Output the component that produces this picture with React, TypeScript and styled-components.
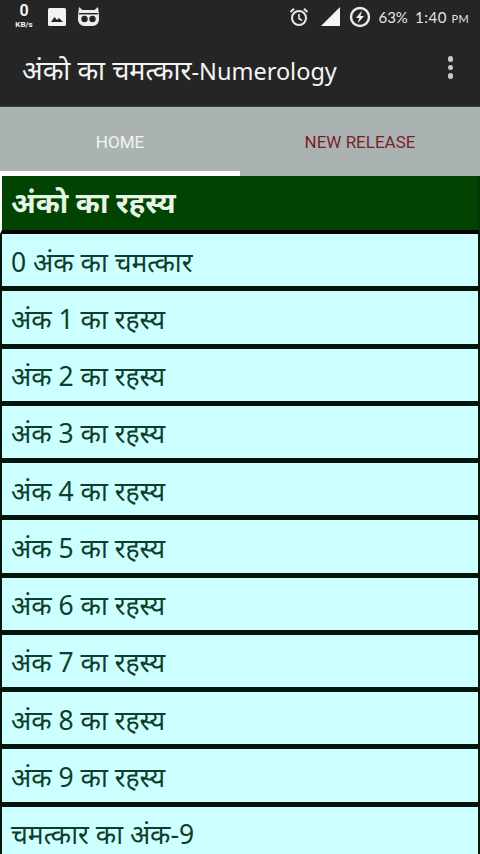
import React from 'react';
import styled, { createGlobalStyle } from 'styled-components';

const Global = createGlobalStyle`
  html, body { margin: 0; padding: 0; background: #fff; }
  body { font-family: "Noto Sans", "Roboto", sans-serif; }
`;

const Screen = styled.div`
  width: 480px;
  height: 854px;
  overflow: hidden;
  display: flex;
  flex-direction: column;
  background: #0a1a0f;
`;

const Header = styled.div`
  background: #252526;
  height: 106px;
  flex: none;
  display: flex;
  flex-direction: column;
  color: #f2f2f2;
`;

const StatusBar = styled.div`
  height: 33px;
  flex: none;
  padding: 0 11px 0 12px;
  display: flex;
  align-items: center;
  justify-content: space-between;
`;

const StatusGroup = styled.div<{ $gap: number }>`
  display: flex;
  align-items: center;
  gap: ${(p) => p.$gap}px;
`;

const Speed = styled.div`
  display: flex;
  flex-direction: column;
  align-items: center;
  margin-top: -3px;
  font-family: "Roboto", sans-serif;
  font-weight: 700;
  font-size: 8px;
  line-height: 10px;
  width: 24px;
  span { font-size: 16px; line-height: 19px; }
`;

const StatusText = styled.span`
  font-family: "Lato", sans-serif;
  font-size: 15px;
  color: #e4e4e4;
`;

const ClockText = styled(StatusText)`
  letter-spacing: 0.6px;
  small { font-size: 11px; letter-spacing: 0.3px; }
`;

const Toolbar = styled.div`
  flex: 1;
  display: flex;
  align-items: center;
  justify-content: space-between;
  padding: 0 27px 0 22px;
`;

const Title = styled.div`
  font-size: 23.5px;
  color: #f4f4f4;
`;

const TitleHindi = styled.span`
  font-size: 27px;
`;

const Overflow = styled.div`
  display: flex;
  flex-direction: column;
  gap: 3px;
  margin-top: -4px;
  i { width: 5.5px; height: 5.5px; border-radius: 50%; background: #c9c9c9; display: block; }
`;

const Tabs = styled.div`
  height: 70px;
  flex: none;
  display: flex;
  background: #abb3b2;
  border-top: 1px solid #3a3f42;
  box-sizing: border-box;
`;

const Tab = styled.div<{ $active?: boolean }>`
  width: 240px;
  display: flex;
  align-items: center;
  justify-content: center;
  box-sizing: border-box;
  padding-top: 6px;
  font-family: "Roboto", sans-serif;
  font-size: 17px;
  color: ${(p) => (p.$active ? '#f1f4f3' : '#7a1f2a')};
  border-bottom: 5px solid ${(p) => (p.$active ? '#ffffff' : 'transparent')};
`;

const List = styled.div`
  flex: 1;
  display: flex;
  flex-direction: column;
`;

const Heading = styled.div`
  height: 58px;
  flex: none;
  box-sizing: border-box;
  background: #014401;
  border-left: 2px solid #fff;
  border-right: 2px solid #02330a;
  border-bottom: 4px solid #000;
  padding: 0 0 3px 9px;
  display: flex;
  align-items: center;
  font-size: 29px;
  font-weight: 700;
  color: #e6f5e6;
`;

const Row = styled.div`
  height: 57.25px;
  flex: none;
  box-sizing: border-box;
  background: #ccffff;
  border-left: 2px solid #04140a;
  border-right: 2px solid #04140a;
  border-bottom: 5px solid #04140a;
  padding: 3px 0 0 9px;
  display: flex;
  align-items: center;
  font-size: 26.5px;
  color: #0f3d2a;

  &:first-of-type { height: 59px; }
`;

const rows = [
  '0 अंक का चमत्कार',
  'अंक 1 का रहस्य',
  'अंक 2 का रहस्य',
  'अंक 3 का रहस्य',
  'अंक 4 का रहस्य',
  'अंक 5 का रहस्य',
  'अंक 6 का रहस्य',
  'अंक 7 का रहस्य',
  'अंक 8 का रहस्य',
  'अंक 9 का रहस्य',
  'चमत्कार का अंक-9',
];

export default function App() {
  return (
    <Screen>
      <Global />
      <Header>
        <StatusBar>
          <StatusGroup $gap={12}>
            <Speed><span>0</span>KB/s</Speed>
            <svg width="18" height="18" viewBox="0 0 18 18">
              <rect width="18" height="18" rx="1.5" fill="#f2f2f2" />
              <path d="M3 14l3.5-5 2.5 3 2-2 4 4z" fill="#252526" />
            </svg>
            <svg width="21" height="19" viewBox="0 0 21 19">
              <path d="M1 0l3.500 3h12L20 0q1 6 1 12a6.500 6.500 0 0 1-6.500 7h-8A6.500 6.500 0 0 1 0 12q0-6 1-12z" fill="#ededed" />
              <circle cx="6.500" cy="12" r="3.200" fill="#252526" />
              <circle cx="14.500" cy="12" r="3.200" fill="#252526" />
              <rect x="1" y="6" width="19" height="1.400" fill="#252526" />
            </svg>
          </StatusGroup>
          <StatusGroup $gap={7}>
            <svg width="20" height="20" viewBox="0 0 20 20" fill="none" stroke="#e8e8e8">
              <circle cx="10" cy="11" r="7" strokeWidth="2" />
              <path d="M10 7v4.500l3 2" strokeWidth="1.600" />
              <path d="M1.500 5L5 1.800M18.500 5L15 1.800" strokeWidth="2" />
            </svg>
            <svg width="19" height="19" viewBox="0 0 19 19" style={{ marginLeft: 5 }}>
              <path d="M0 19L19 0v19z" fill="#f6f6f6" />
            </svg>
            <svg width="22" height="22" viewBox="0 0 22 22" style={{ marginLeft: 2 }}>
              <circle cx="11" cy="11" r="9" fill="none" stroke="#ececec" strokeWidth="2.400" />
              <path d="M13 4.500L7 12h3.400L8.500 17.500 15 10h-3.600z" fill="#f4f4f4" />
            </svg>
            <StatusText>63%</StatusText>
            <ClockText>1:40 <small>PM</small></ClockText>
          </StatusGroup>
        </StatusBar>
        <Toolbar>
          <Title><TitleHindi>अंको का चमत्कार</TitleHindi>-Numerology</Title>
          <Overflow><i /><i /><i /></Overflow>
        </Toolbar>
      </Header>
      <Tabs>
        <Tab $active>HOME</Tab>
        <Tab>NEW RELEASE</Tab>
      </Tabs>
      <List>
        <Heading>अंको का रहस्य</Heading>
        {rows.map((r) => (
          <Row key={r}>{r}</Row>
        ))}
      </List>
    </Screen>
  );
}
